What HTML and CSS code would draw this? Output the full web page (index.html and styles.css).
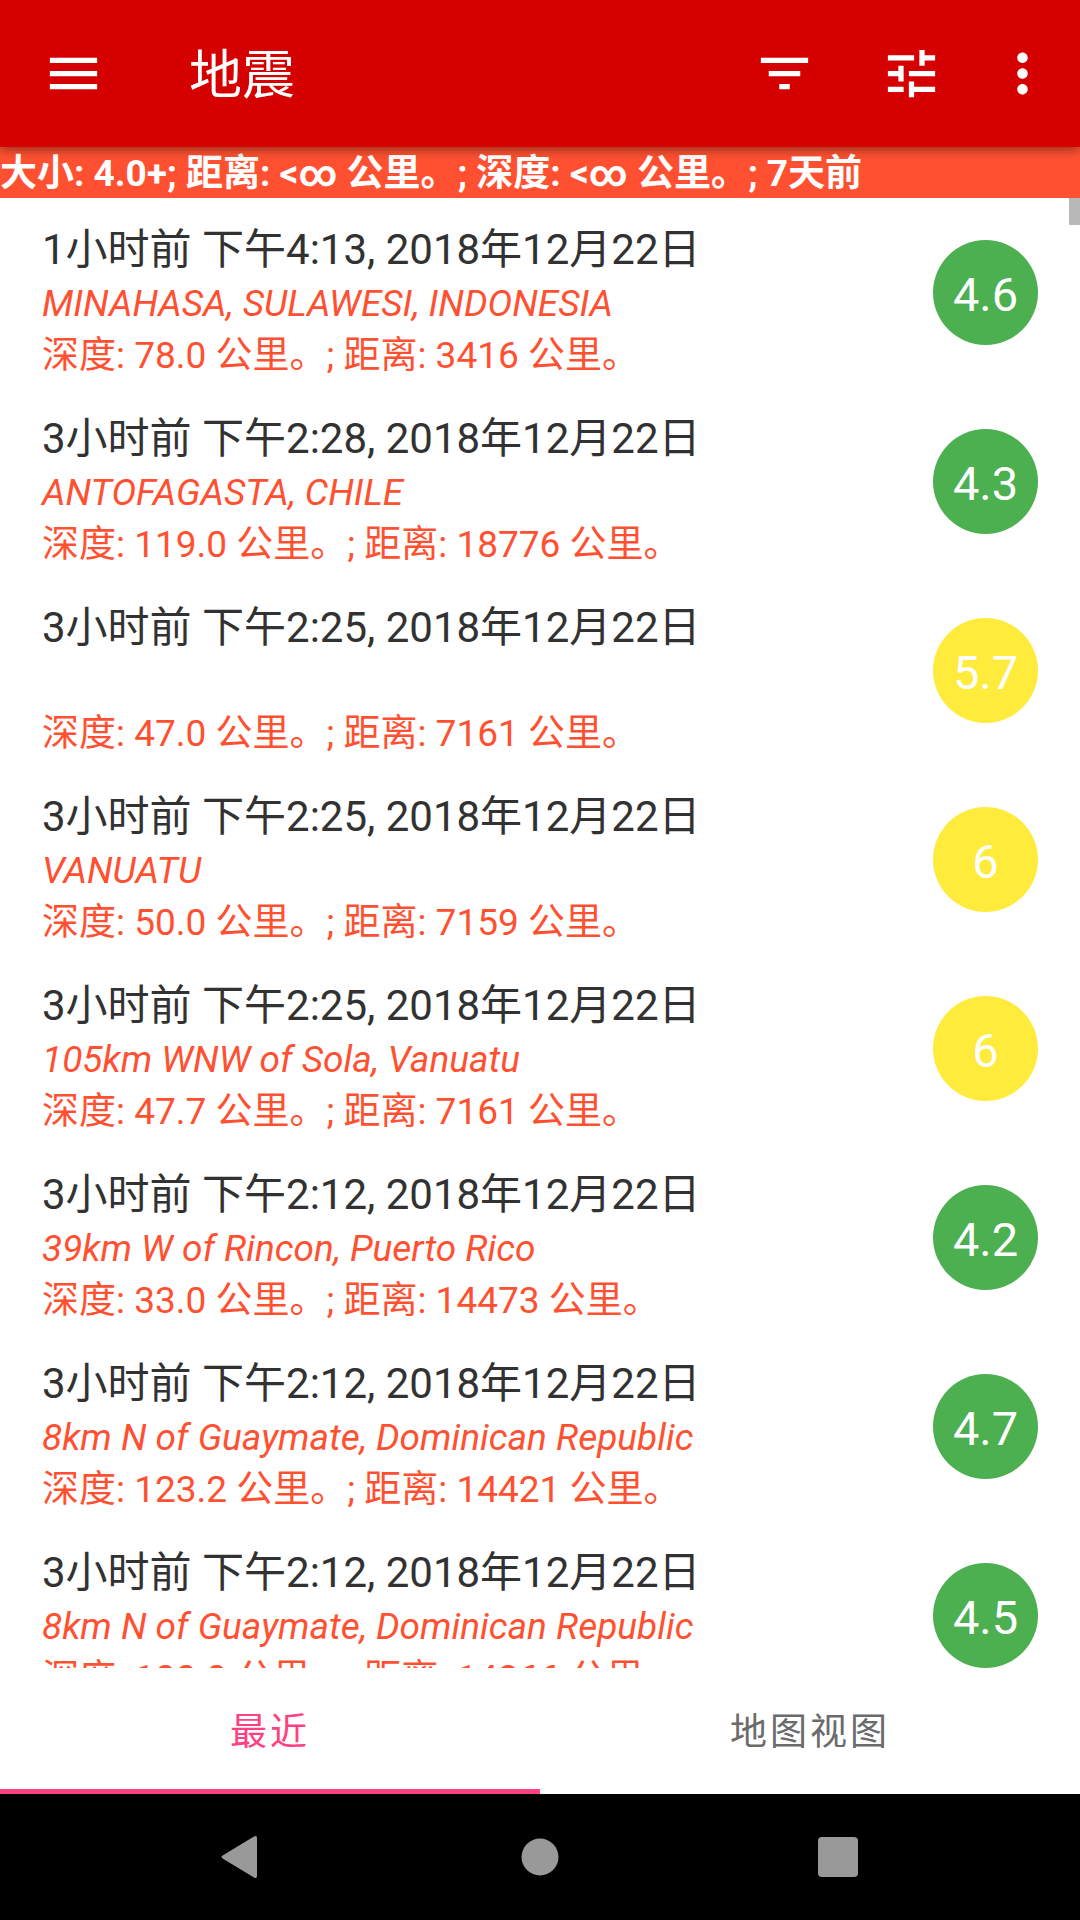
FILE: index.html
```html
<!DOCTYPE html>
<html lang="zh-CN">

<head>
    <meta charset="UTF-8">
    <meta name="viewport" content="width=device-width, initial-scale=1.0">
    <title>地震</title>
    <link rel="stylesheet" href="styles.css">
</head>

<body>
    <header class="app-bar">
        <button class="icon-btn menu-btn" type="button" aria-label="菜单">
            <svg class="icon" viewBox="0 0 24 24"><path d="M3 18h18v-2H3v2zm0-5h18v-2H3v2zm0-7v2h18V6H3z"/></svg>
        </button>
        <h1 class="app-title">地震</h1>
        <button class="icon-btn" type="button" aria-label="筛选">
            <svg class="icon" viewBox="0 0 24 24"><path d="M10 18h4v-2h-4v2zM3 6v2h18V6H3zm3 7h12v-2H6v2z"/></svg>
        </button>
        <button class="icon-btn" type="button" aria-label="设置">
            <svg class="icon" viewBox="0 0 24 24"><path d="M3 17v2h6v-2H3zM3 5v2h10V5H3zm10 16v-2h8v-2h-8v-2h-2v6h2zM7 9v2H3v2h4v2h2V9H7zm14 4v-2H11v2h10zm-6-4h2V7h4V5h-4V3h-2v6z"/></svg>
        </button>
        <button class="icon-btn more-btn" type="button" aria-label="更多">
            <svg class="icon" viewBox="0 0 24 24"><path d="M12 8c1.1 0 2-.9 2-2s-.9-2-2-2-2 .9-2 2 .9 2 2 2zm0 2c-1.1 0-2 .9-2 2s.9 2 2 2 2-.9 2-2-.9-2-2-2zm0 6c-1.1 0-2 .9-2 2s.9 2 2 2 2-.9 2-2-.9-2-2-2z"/></svg>
        </button>
    </header>

    <p class="filter-bar">大小: 4.0+; 距离: &lt;∞ 公里。; 深度: &lt;∞ 公里。; 7天前</p>

    <main class="list-wrap">
        <ul class="quake-list">
            <li class="quake">
                <div class="quake-info">
                    <h2 class="quake-time">1小时前 下午4:13, 2018年12月22日</h2>
                    <p class="quake-place">MINAHASA, SULAWESI, INDONESIA</p>
                    <p class="quake-detail">深度: 78.0 公里。; 距离: 3416 公里。</p>
                </div>
                <span class="magnitude">4.6</span>
            </li>
            <li class="quake">
                <div class="quake-info">
                    <h2 class="quake-time">3小时前 下午2:28, 2018年12月22日</h2>
                    <p class="quake-place">ANTOFAGASTA, CHILE</p>
                    <p class="quake-detail">深度: 119.0 公里。; 距离: 18776 公里。</p>
                </div>
                <span class="magnitude">4.3</span>
            </li>
            <li class="quake">
                <div class="quake-info">
                    <h2 class="quake-time">3小时前 下午2:25, 2018年12月22日</h2>
                    <p class="quake-place"></p>
                    <p class="quake-detail">深度: 47.0 公里。; 距离: 7161 公里。</p>
                </div>
                <span class="magnitude strong">5.7</span>
            </li>
            <li class="quake">
                <div class="quake-info">
                    <h2 class="quake-time">3小时前 下午2:25, 2018年12月22日</h2>
                    <p class="quake-place">VANUATU</p>
                    <p class="quake-detail">深度: 50.0 公里。; 距离: 7159 公里。</p>
                </div>
                <span class="magnitude strong">6</span>
            </li>
            <li class="quake">
                <div class="quake-info">
                    <h2 class="quake-time">3小时前 下午2:25, 2018年12月22日</h2>
                    <p class="quake-place">105km WNW of Sola, Vanuatu</p>
                    <p class="quake-detail">深度: 47.7 公里。; 距离: 7161 公里。</p>
                </div>
                <span class="magnitude strong">6</span>
            </li>
            <li class="quake">
                <div class="quake-info">
                    <h2 class="quake-time">3小时前 下午2:12, 2018年12月22日</h2>
                    <p class="quake-place">39km W of Rincon, Puerto Rico</p>
                    <p class="quake-detail">深度: 33.0 公里。; 距离: 14473 公里。</p>
                </div>
                <span class="magnitude">4.2</span>
            </li>
            <li class="quake">
                <div class="quake-info">
                    <h2 class="quake-time">3小时前 下午2:12, 2018年12月22日</h2>
                    <p class="quake-place">8km N of Guaymate, Dominican Republic</p>
                    <p class="quake-detail">深度: 123.2 公里。; 距离: 14421 公里。</p>
                </div>
                <span class="magnitude">4.7</span>
            </li>
            <li class="quake">
                <div class="quake-info">
                    <h2 class="quake-time">3小时前 下午2:12, 2018年12月22日</h2>
                    <p class="quake-place">8km N of Guaymate, Dominican Republic</p>
                    <p class="quake-detail">深度: 100.0 公里。; 距离: 14366 公里。</p>
                </div>
                <span class="magnitude">4.5</span>
            </li>
        </ul>
        <div class="scroll-thumb"></div>
    </main>

    <nav class="tabs">
        <a class="tab active" href="#recent">最近</a>
        <a class="tab" href="#map">地图视图</a>
    </nav>

    <footer class="system-nav">
        <button class="nav-btn" type="button" aria-label="返回">
            <svg class="nav-icon" viewBox="0 0 48 48"><path d="M5 22.300Q2 24 5 25.700L36 44.500Q39 46 39 43V5Q39 2 36 3.500z"/></svg>
        </button>
        <button class="nav-btn" type="button" aria-label="主页">
            <svg class="nav-icon" viewBox="0 0 48 48"><circle cx="24" cy="24" r="18.500"/></svg>
        </button>
        <button class="nav-btn" type="button" aria-label="最近任务">
            <svg class="nav-icon" viewBox="0 0 48 48"><rect x="4" y="4" width="40" height="40" rx="4"/></svg>
        </button>
    </footer>
</body>

</html>
```
FILE: styles.css
```css
:root {
    --primary-color: #d50000;
    --secondary-color: #ff5131;
    --accent-color: #ff4081;
    --text-color: #323232;
    --muted-color: #6b6b6b;
    --green: #4caf50;
    --yellow: #ffeb3b;
}

* {
    margin: 0;
    padding: 0;
    box-sizing: border-box;
}

body {
    display: flex;
    flex-direction: column;
    height: 100vh;
    overflow: hidden;
    background-color: #fff;
    color: var(--text-color);
    font-family: Roboto, "Noto Sans CJK SC", sans-serif;
}

button {
    border: none;
    background: none;
    cursor: pointer;
}

/* App bar */
.app-bar {
    display: flex;
    align-items: center;
    flex-shrink: 0;
    height: 147px;
    padding-right: 10px;
    background-color: var(--primary-color);
    color: #fff;
    box-shadow: 0 3px 10px rgba(0, 0, 0, 0.4);
    z-index: 1;
}

.icon-btn {
    display: flex;
    justify-content: center;
    width: 127px;
}

.menu-btn {
    width: 147px;
}

.more-btn {
    width: 95px;
}

.icon {
    width: 63px;
    height: 63px;
    fill: #fff;
}

.app-title {
    flex: 1;
    padding: 6px 0 0 42px;
    font-size: 53px;
    font-weight: 400;
    line-height: 63px;
}

/* Active filter summary */
.filter-bar {
    flex-shrink: 0;
    padding-top: 2px;
    background-color: var(--secondary-color);
    color: #fff;
    font-size: 37px;
    font-weight: 700;
    line-height: 49px;
    white-space: nowrap;
}

/* Earthquake list */
.list-wrap {
    position: relative;
    flex: 1;
    min-height: 0;
    overflow: hidden;
}

.quake-list {
    list-style: none;
}

.quake {
    display: flex;
    align-items: center;
    justify-content: space-between;
    padding: 0 42px;
}

.quake-info {
    padding: 25px 0 5px;
}

.quake-time {
    margin-bottom: 2px;
    font-size: 42px;
    font-weight: 400;
    line-height: 53px;
}

.quake-place,
.quake-detail {
    min-height: 52px;
    color: var(--secondary-color);
    font-size: 37px;
    line-height: 52px;
}

.quake-place {
    font-style: italic;
}

.magnitude {
    width: 105px;
    height: 105px;
    border-radius: 50%;
    background-color: var(--green);
    color: #fff;
    font-size: 47px;
    line-height: 110px;
    text-align: center;
}

.magnitude.strong {
    background-color: var(--yellow);
}

.scroll-thumb {
    position: absolute;
    top: 0;
    right: 0;
    width: 11px;
    height: 27px;
    background-color: #b8b8b8;
}

/* Tabs */
.tabs {
    display: flex;
    flex-shrink: 0;
}

.tab {
    flex: 1;
    padding-top: 8px;
    border-bottom: 5px solid transparent;
    color: var(--muted-color);
    font-size: 37px;
    letter-spacing: 3px;
    line-height: 113px;
    text-align: center;
    text-decoration: none;
}

.tab.active {
    border-bottom-color: var(--accent-color);
    color: var(--accent-color);
}

/* System navigation */
.system-nav {
    display: flex;
    justify-content: center;
    flex-shrink: 0;
    height: 126px;
    background-color: #000;
}

.nav-btn {
    display: flex;
    align-items: center;
    justify-content: center;
    width: 298px;
}

.nav-icon {
    width: 48px;
    height: 48px;
    fill: #999;
}
```
